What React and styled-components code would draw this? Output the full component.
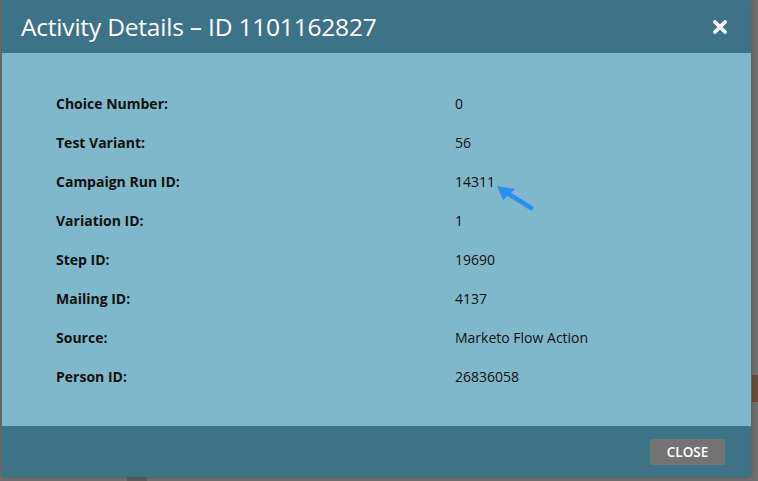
import React from "react";
import styled, { createGlobalStyle } from "styled-components";

const GlobalStyle = createGlobalStyle`
  html, body {
    margin: 0;
    padding: 0;
    background: #6f6f6f;
    height: 100%;
    overflow: hidden;
  }
  body {
    font-family: "Open Sans", "Liberation Sans", sans-serif;
  }
`;

const rows = [
  { label: "Choice Number:", value: "0" },
  { label: "Test Variant:", value: "56" },
  { label: "Campaign Run ID:", value: "14311", pointer: true },
  { label: "Variation ID:", value: "1" },
  { label: "Step ID:", value: "19690" },
  { label: "Mailing ID:", value: "4137" },
  { label: "Source:", value: "Marketo Flow Action" },
  { label: "Person ID:", value: "26836058" },
];

const Backdrop = styled.div`
  position: relative;
  width: 758px;
  height: 481px;
  background: #6f6f6f;
`;

const BehindStrip = styled.div`
  position: absolute;
  background: ${(p) => p.color};
  left: ${(p) => p.x}px;
  top: ${(p) => p.y}px;
  width: ${(p) => p.w}px;
  height: ${(p) => p.h}px;
`;

const Modal = styled.div`
  position: absolute;
  left: 2px;
  top: 0;
  width: 749px;
  height: 477px;
  display: flex;
  flex-direction: column;
  background: #7fb8cb;
  box-shadow: 0 0 4px rgba(0, 0, 0, 0.25);
`;

const Header = styled.div`
  height: 53px;
  flex: none;
  background: #3d7387;
  display: flex;
  align-items: center;
  justify-content: space-between;
  padding: 0 24px 0 19px;
  box-sizing: border-box;
`;

const Title = styled.h2`
  margin: 0;
  color: #fff;
  font-weight: 400;
  font-size: 24.5px;
  letter-spacing: -0.2px;
`;

const CloseIcon = styled.button`
  border: 0;
  background: none;
  padding: 0;
  width: 14px;
  height: 14px;
  display: flex;
  cursor: pointer;
`;

const Body = styled.div`
  flex: 1;
  padding: 31px 0 0 54px;
`;

const Row = styled.div`
  display: grid;
  grid-template-columns: 399px 1fr;
  height: 39px;
  line-height: 39px;
  font-size: 14px;
  color: #111;
`;

const Label = styled.span`
  font-weight: 700;
`;

const Value = styled.span`
  position: relative;
`;

const Pointer = styled.svg`
  position: absolute;
  left: 38px;
  top: 20px;
`;

const Footer = styled.div`
  height: 51px;
  flex: none;
  background: #3d7387;
  display: flex;
  justify-content: flex-end;
  align-items: flex-start;
  padding: 13px 26px 0 0;
  box-sizing: border-box;
`;

const CloseButton = styled.button`
  width: 75px;
  height: 26px;
  border: 0;
  background: #737373;
  color: #fff;
  font-family: "Open Sans", "Liberation Sans", sans-serif;
  font-size: 13.5px;
  font-weight: 600;
  padding: 0;
  cursor: pointer;
`;

const App = () => {
  return (
    <Backdrop>
      <GlobalStyle />
      <BehindStrip color="#6b4a3a" x={752} y={375} w={6} h={27} />
      <BehindStrip color="#5c5c5c" x={127} y={477} w={20} h={4} />
      <Modal>
        <Header>
          <Title>Activity Details – ID 1101162827</Title>
          <CloseIcon aria-label="Close">
            <svg width="14" height="14" viewBox="0 0 14 14">
              <path
                d="M2 2 L12 12 M12 2 L2 12"
                stroke="#fff"
                strokeWidth="3.6"
                strokeLinecap="square"
              />
            </svg>
          </CloseIcon>
        </Header>
        <Body>
          {rows.map((r) => (
            <Row key={r.label}>
              <Label>{r.label}</Label>
              <Value>
                {r.value}
                {r.pointer && (
                  <Pointer width="42" height="30" viewBox="0 0 42 30">
                    <path d="M38 26 L14 11" stroke="#2b8ef2" strokeWidth="4.5" strokeLinecap="round" />
                    <path d="M4 4 L22 7 L10 18 Z" fill="#2b8ef2" />
                  </Pointer>
                )}
              </Value>
            </Row>
          ))}
        </Body>
        <Footer>
          <CloseButton>CLOSE</CloseButton>
        </Footer>
      </Modal>
    </Backdrop>
  );
};

export default App;
